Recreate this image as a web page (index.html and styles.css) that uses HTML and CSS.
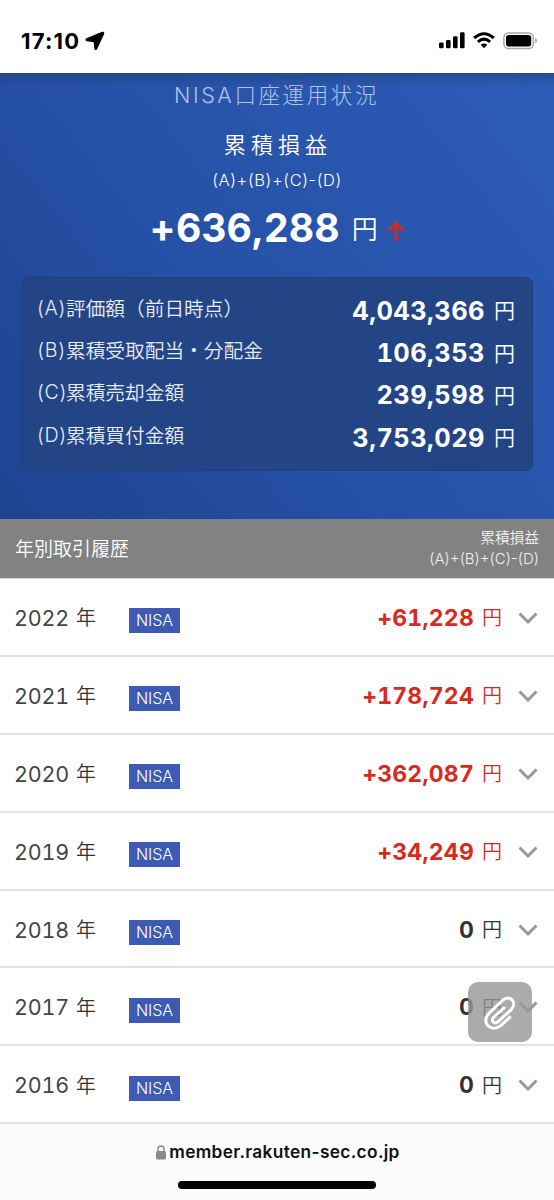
FILE: index.html
```
<!DOCTYPE html>
<html lang="ja">
<head>
    <meta charset="UTF-8">
    <meta name="viewport" content="width=device-width, initial-scale=1.0">
    <title>NISA口座運用状況</title>
    <link rel="stylesheet" href="styles.css">
</head>
<body>
    <div class="status-bar">
        <span class="time">17:10</span>
        <svg class="location" width="20" height="20" viewBox="0 0 20 20"><path d="M17.4 1.4 1.6 7.9Q.4 8.8 1.6 9.6L9.2 10.6 10 17.9Q10.7 19.1 11.5 17.9L18.6 2.7Q18.9 1 17.4 1.4Z" stroke="#000" stroke-width="1.2" stroke-linejoin="round"/></svg>
        <div class="status-icons">
            <svg width="26" height="17" viewBox="0 0 26 17">
                <rect x="0" y="10.5" width="4.6" height="5.8" rx="1.3"/>
                <rect x="7" y="8" width="4.6" height="8.3" rx="1.3"/>
                <rect x="14" y="4.2" width="4.6" height="12.1" rx="1.3"/>
                <rect x="21" y="0.3" width="4.6" height="16" rx="1.3"/>
            </svg>
            <svg class="wifi" width="22" height="17" viewBox="0 0 22 17" fill="none" stroke="#000" stroke-width="3">
                <path d="M1.2 6Q11-2.6 20.8 6"/>
                <path d="M4.9 9.9Q11 4.4 17.1 9.9"/>
                <path d="M11 16.2 7.7 12.8Q11 10 14.3 12.8Z" fill="#000" stroke="none"/>
            </svg>
            <svg class="battery" width="35" height="18" viewBox="0 0 35 18">
                <rect x="0.9" y="0.9" width="29.4" height="15.6" rx="4.6" fill="none" stroke="#a8a8a8" stroke-width="1.5"/>
                <rect x="3" y="3" width="25.2" height="11.4" rx="2.6"/>
                <path d="M32.2 6Q34 6.8 34 8.7 34 10.6 32.2 11.4Z" fill="#a0a0a0"/>
            </svg>
        </div>
    </div>

    <div class="summary">
        <h1>NISA口座運用状況</h1>
        <h2>累積損益</h2>
        <p class="formula">(A)+(B)+(C)-(D)</p>
        <div class="total">
            <span class="total-num">+636,288</span>
            <span class="total-yen">円</span>
            <svg width="18" height="20" viewBox="0 0 18 20" fill="none" stroke="#d9291c" stroke-width="2.8"><path d="M9 20V2.5M1.5 9.8 9 2.3 16.5 9.8"/></svg>
        </div>
        <dl class="breakdown">
            <div class="item"><dt><span>(A)</span>評価額（前日時点）</dt><dd><b>4,043,366</b><span>円</span></dd></div>
            <div class="item"><dt><span>(B)</span>累積受取配当・分配金</dt><dd><b>106,353</b><span>円</span></dd></div>
            <div class="item"><dt><span>(C)</span>累積売却金額</dt><dd><b>239,598</b><span>円</span></dd></div>
            <div class="item"><dt><span>(D)</span>累積買付金額</dt><dd><b>3,753,029</b><span>円</span></dd></div>
        </dl>
    </div>

    <div class="history-head">
        <span class="history-title">年別取引履歴</span>
        <div class="history-note">
            <div class="note-label">累積損益</div>
            <div class="note-formula">(A)+(B)+(C)-(D)</div>
        </div>
    </div>

    <ul class="history">
        <li class="plus">
            <span class="year">2022</span><span class="nen">年</span><span class="badge">NISA</span>
            <b>+61,228</b><span class="yen">円</span>
            <svg class="arrow" viewBox="0 0 20 12"><path d="M1.5 1.5 10 10 18.5 1.5"/></svg>
        </li>
        <li class="plus">
            <span class="year">2021</span><span class="nen">年</span><span class="badge">NISA</span>
            <b>+178,724</b><span class="yen">円</span>
            <svg class="arrow" viewBox="0 0 20 12"><path d="M1.5 1.5 10 10 18.5 1.5"/></svg>
        </li>
        <li class="plus">
            <span class="year">2020</span><span class="nen">年</span><span class="badge">NISA</span>
            <b>+362,087</b><span class="yen">円</span>
            <svg class="arrow" viewBox="0 0 20 12"><path d="M1.5 1.5 10 10 18.5 1.5"/></svg>
        </li>
        <li class="plus">
            <span class="year">2019</span><span class="nen">年</span><span class="badge">NISA</span>
            <b>+34,249</b><span class="yen">円</span>
            <svg class="arrow" viewBox="0 0 20 12"><path d="M1.5 1.5 10 10 18.5 1.5"/></svg>
        </li>
        <li>
            <span class="year">2018</span><span class="nen">年</span><span class="badge">NISA</span>
            <b>0</b><span class="yen">円</span>
            <svg class="arrow" viewBox="0 0 20 12"><path d="M1.5 1.5 10 10 18.5 1.5"/></svg>
        </li>
        <li>
            <span class="year">2017</span><span class="nen">年</span><span class="badge">NISA</span>
            <b>0</b><span class="yen">円</span>
            <svg class="arrow" viewBox="0 0 20 12"><path d="M1.5 1.5 10 10 18.5 1.5"/></svg>
        </li>
        <li>
            <span class="year">2016</span><span class="nen">年</span><span class="badge">NISA</span>
            <b>0</b><span class="yen">円</span>
            <svg class="arrow" viewBox="0 0 20 12"><path d="M1.5 1.5 10 10 18.5 1.5"/></svg>
        </li>
    </ul>

    <div class="browser-bar">
        <div class="address">
            <svg width="10" height="15" viewBox="0 0 10 15"><rect x="0" y="6" width="10" height="8.5" rx="1.5" fill="#8a898e"/><path d="M2 7V4Q2 1 5 1T8 4V7" fill="none" stroke="#8a898e" stroke-width="1.4"/></svg>
            <span>member.rakuten-sec.co.jp</span>
        </div>
        <div class="home-bar"></div>
    </div>

    <!-- floating shortcut button -->
    <div class="clip-button">
        <svg width="34" height="38" viewBox="0 0 34 38" fill="none" stroke="#fff" stroke-width="3">
            <path d="M22 12 10.8 22.2C7 26.4 11.8 29.8 15.4 26.4L28.4 14.4C34.6 7.2 26.8-.8 19.8 5.2L6 18.2C-2.6 27.4 8 38.4 17.8 30.6L27.8 21.4"/>
        </svg>
    </div>
</body>
</html>
```
FILE: styles.css
```
* {
    box-sizing: border-box;
}

body {
    margin: 0;
    width: 554px;
    height: 1200px;
    overflow: hidden;
    position: relative;
    background-color: #fff;
    color: #333;
    font-family: Inter, "Noto Sans CJK JP", sans-serif;
}

h1, h2, p, dl, dd, ul {
    margin: 0;
    padding: 0;
}

svg {
    display: block;
    flex: none;
}

/* status bar */
.status-bar {
    display: flex;
    height: 73px;
    padding: 8px 17px 0 21px;
    align-items: center;
}

.time {
    font: bold 22px/30px Inter, sans-serif;
    letter-spacing: 1.2px;
    color: #000;
    width: 59px;
}

.location {
    margin-left: 5px;
}

.status-icons {
    display: flex;
    align-items: center;
    margin: 0 -1px 0 auto;
}

.wifi {
    margin-left: 8px;
}

.battery {
    margin-left: 8px;
}

/* summary */
.summary {
    height: 446px;
    padding: 8px 21px 0;
    text-align: center;
    color: #fff;
    background: linear-gradient(rgba(35, 65, 125, 0.6), rgba(35, 65, 125, 0) 14px), linear-gradient(52deg, #1e4390 0%, #2651a7 45%, #2d5cb7 100%);
}

h1 {
    font: 300 21.5px/28px Inter, "Noto Sans CJK JP", sans-serif;
    letter-spacing: 2.6px;
    padding-right: 1px;
    color: #b3c3e3;
}

h2 {
    font: 350 22px/32px "Noto Sans CJK JP", sans-serif;
    letter-spacing: 5.1px;
    margin-top: 18px;
    padding-left: 2px;
}

.formula {
    font: 350 16.5px/24px Inter, sans-serif;
    letter-spacing: 0.6px;
    margin-top: 9px;
}

.total {
    display: flex;
    height: 48px;
    margin-top: 10px;
    justify-content: center;
    align-items: center;
}

.total-num {
    font-size: 39px;
    font-weight: 700;
    letter-spacing: 0.1px;
    margin-top: 2px;
}

.total-yen {
    font: 350 26px/40px "Noto Sans CJK JP", sans-serif;
    margin: 4px 9px 0 12px;
}

.total svg {
    margin-top: 10px;
}

.breakdown {
    height: 194px;
    margin-top: 27px;
    padding: 11px 17px 0 15px;
    border: 1px solid #213f7c;
    border-radius: 7px;
    background-color: #234586;
}

.item {
    display: flex;
    height: 42.4px;
    justify-content: space-between;
    align-items: center;
}

dt {
    display: flex;
    font: 350 19.7px/38px "Noto Sans CJK JP", sans-serif;
    color: #e6ebf5;
    white-space: nowrap;
    padding-bottom: 5px;
}

dt span {
    font-family: Inter, sans-serif;
    width: 29px;
    letter-spacing: 0.6px;
}

dd {
    display: flex;
    align-items: center;
}

dd b {
    font-size: 25.5px;
    line-height: 40px;
    letter-spacing: 0.4px;
    font-variant-numeric: tabular-nums;
    padding-top: 1px;
}

dd span {
    font: 350 21px/40px "Noto Sans CJK JP", sans-serif;
    margin: -2px 0 0 9px;
}

/* yearly history */
.history-head {
    display: flex;
    height: 59px;
    padding: 0 15px 2px;
    justify-content: space-between;
    align-items: center;
    background-color: #828282;
    color: #fff;
}

.history-title {
    font: 350 19px/30px "Noto Sans CJK JP", sans-serif;
}

.history-note {
    text-align: right;
    color: #f0f0f0;
}

.note-label {
    font: 350 14.7px/22px "Noto Sans CJK JP", sans-serif;
}

.note-formula {
    font: 350 15px/22px Inter, sans-serif;
}

.history {
    list-style: none;
    border-top: 1px solid #d0d0d0;
}

.history li {
    display: flex;
    height: 77.9px;
    padding: 2px 16px 0 14px;
    align-items: center;
    border-bottom: 2px solid #e2e2e2;
}

.year {
    font-size: 21.5px;
    font-variant-numeric: tabular-nums;
    color: #444;
    letter-spacing: -0.2px;
    width: 62px;
}

.nen {
    font: 350 20px/30px "Noto Sans CJK JP", sans-serif;
    margin-top: -1px;
}

.badge {
    font: 350 16px/25px Inter, sans-serif;
    width: 51px;
    height: 25px;
    margin: 6px auto 0 33px;
    text-align: center;
    background-color: #3d5bb2;
    color: #fff;
}

.history b {
    font-size: 23px;
    letter-spacing: 0.2px;
    font-variant-numeric: tabular-nums;
}

.yen {
    font: 350 20px/30px "Noto Sans CJK JP", sans-serif;
    margin: -1px 16px 0 8px;
}

.plus b, .plus .yen {
    color: #d9291c;
}

.arrow {
    width: 20px;
    height: 12px;
    fill: none;
    stroke: #999;
    stroke-width: 3;
}

/* bottom bar */
.browser-bar {
    height: 77px;
    padding-top: 16px;
    background-color: #fbfbfb;
}

.address {
    display: flex;
    justify-content: center;
    align-items: center;
    font: 600 17.3px/24px Inter, sans-serif;
    letter-spacing: 0.35px;
    color: #111;
    padding-left: 2px;
}

.address svg {
    margin-right: 3px;
}

.home-bar {
    width: 198px;
    height: 8px;
    margin: 17px auto 0;
    border-radius: 4px;
    background-color: #000;
}

.clip-button {
    position: absolute;
    left: 468px;
    top: 982px;
    width: 64px;
    height: 60px;
    padding: 13px 15px;
    border-radius: 10px;
    background-color: rgba(150, 150, 150, 0.8);
}
```
